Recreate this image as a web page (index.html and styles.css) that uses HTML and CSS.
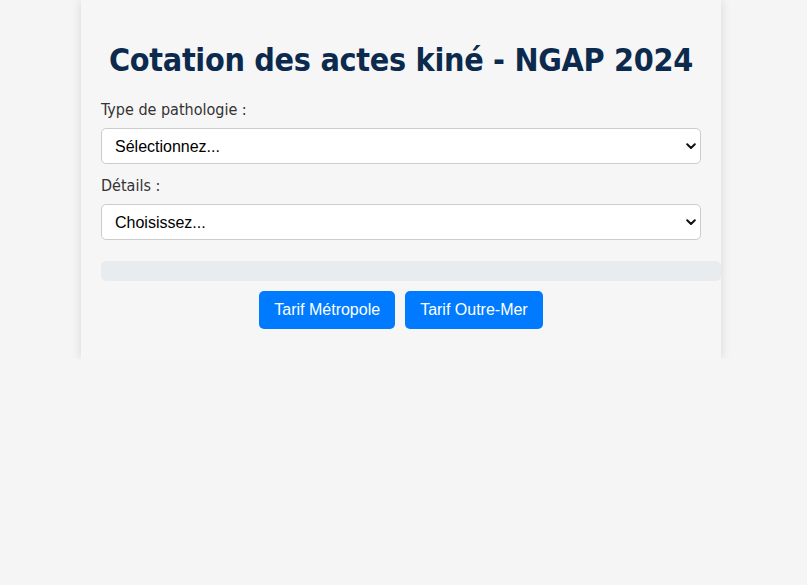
FILE: index.html
```html
<!DOCTYPE html>
<html lang="fr">
<head>
<meta charset="utf-8">
<title>Cotation des actes kiné - NGAP 2024</title>
<link rel="stylesheet" href="styles.css">
</head>
<body>
<div class="container">
  <h1 class="title">Cotation des actes kiné - NGAP 2024</h1>
  <label class="field-label" for="pathologie">Type de pathologie :</label>
  <div class="select-wrap">
    <select id="pathologie" class="select">
      <option>Sélectionnez...</option>
    </select>
    <svg class="chevron" width="10" height="7" viewBox="0 0 10 7"><path d="M1.2 1.2 L5 5 L8.8 1.2" fill="none" stroke="#111" stroke-width="2" stroke-linecap="round" stroke-linejoin="round"/></svg>
  </div>
  <label class="field-label" for="details">Détails :</label>
  <div class="select-wrap">
    <select id="details" class="select">
      <option>Choisissez...</option>
    </select>
    <svg class="chevron" width="10" height="7" viewBox="0 0 10 7"><path d="M1.2 1.2 L5 5 L8.8 1.2" fill="none" stroke="#111" stroke-width="2" stroke-linecap="round" stroke-linejoin="round"/></svg>
  </div>
  <div class="result"></div>
  <div class="actions">
    <button class="btn">Tarif Métropole</button>
    <button class="btn">Tarif Outre-Mer</button>
  </div>
</div>
</body>
</html>
```
FILE: styles.css
```css
html, body {
  margin: 0;
  padding: 0;
  background: #f5f5f5;
}
body {
  padding-right: 5px;
  font-family: "DejaVu Sans Condensed", "DejaVu Sans", sans-serif;
  color: #333;
}
.container {
  width: 600px;
  margin: 0 auto;
  padding: 20px;
  background: #f6f6f6;
  box-shadow: 0 0 10px rgba(0, 0, 0, 0.12);
}
.title {
  margin: 20px 0 20px;
  text-align: center;
  color: #0b2a4d;
  font-size: 32px;
  line-height: 40px;
  letter-spacing: -0.3px;
  font-weight: bold;
}
.field-label {
  display: block;
  font-size: 16px;
  line-height: 20px;
  margin-bottom: 8px;
}
.select-wrap {
  position: relative;
  margin-bottom: 12px;
}
.select {
  display: block;
  width: 100%;
  height: 36px;
  box-sizing: border-box;
  -webkit-appearance: none;
  appearance: none;
  background: #fff;
  border: 1px solid #ccc;
  border-radius: 5px;
  padding: 0 13px;
  font-family: "Liberation Sans", Arial, sans-serif;
  font-size: 16px;
  color: #000;
}
.chevron {
  position: absolute;
  right: 5px;
  top: 15px;
}
.result {
  margin-top: 21px;
  padding: 10px;
  width: 100%;
  background: #e9ecef;
  border-radius: 5px;
}
.actions {
  display: flex;
  justify-content: center;
  gap: 10px;
  margin: 10px 0;
}
.btn {
  background: #007bff;
  color: #fff;
  border: none;
  border-radius: 5px;
  padding: 10px 15px;
  font-family: "Liberation Sans", Arial, sans-serif;
  font-size: 16px;
  line-height: 18px;
}
```
